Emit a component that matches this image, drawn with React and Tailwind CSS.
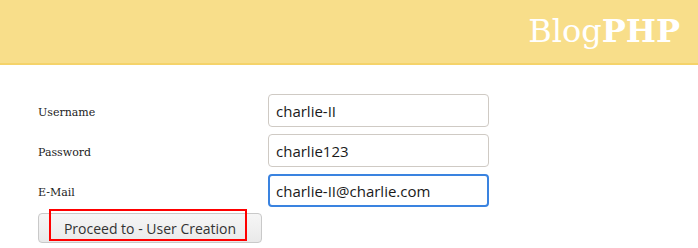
import React from 'react';

const Field = ({ label, value, focused }) => (
  <div className="flex items-center">
    <label className="w-[230px] pt-[6px] text-[11px] text-[#222] font-['DejaVu_Serif',serif]">{label}</label>
    <input
      readOnly
      value={value}
      className={`w-[221px] h-[33px] rounded-[4px] bg-white text-[15px] text-[#1a1a1a] font-['Open_Sans',sans-serif] outline-none ${
        focused ? 'border-2 border-[#3a83e0] px-[6px]' : 'border border-[#cfcac4] px-[7px]'
      }`}
    />
  </div>
);

export default function App() {
  return (
    <div className="w-[698px] h-[248px] bg-white overflow-hidden">
      {/* Header */}
      <header className="h-[65px] bg-[#f8de8a] border-b-[2px] border-[#f5d36a] flex items-center justify-end pr-[18px]">
        <h1 className="text-[32px] text-white font-['DejaVu_Serif',serif] leading-none -mt-[2px]">
          Blog<span className="font-bold">PHP</span>
        </h1>
      </header>

      {/* Form */}
      <div className="pl-[38px] pt-[29px] flex flex-col gap-[7px]">
        <Field label="Username" value="charlie-II" />
        <Field label="Password" value="charlie123" />
        <Field label="E-Mail" value="charlie-II@charlie.com" focused />
        <div className="relative mt-[-1px] w-[224px]">
          <button className="w-[224px] h-[30px] rounded-[4px] border border-[#c9c9c9] bg-gradient-to-b from-[#f6f6f6] to-[#e9e9e9] text-[14px] text-[#333] font-['Open_Sans',sans-serif]">
            Proceed to - User Creation
          </button>
          <div className="absolute left-[11px] top-[-4px] w-[198px] h-[32px] border-2 border-[#ff0000] pointer-events-none" />
        </div>
      </div>
    </div>
  );
}
